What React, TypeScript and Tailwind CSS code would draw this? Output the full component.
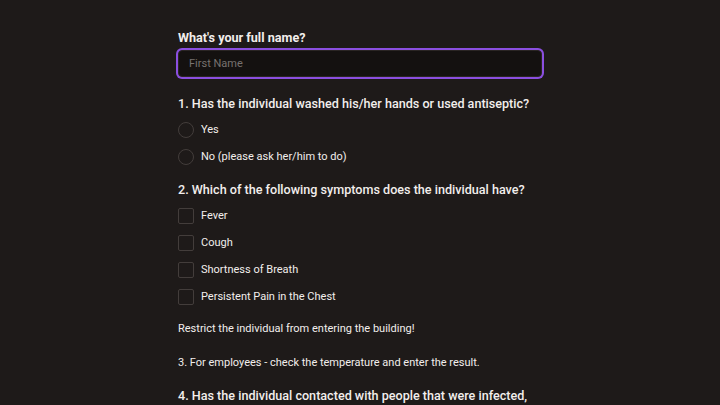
const RADIOS = ["Yes", "No (please ask her/him to do)"];
const SYMPTOMS = ["Fever", "Cough", "Shortness of Breath", "Persistent Pain in the Chest"];

export default function App() {
  return (
    <div
      className="min-h-screen bg-[#1e1a19] text-[#f2eeec] overflow-hidden"
      style={{ fontFamily: "Roboto, 'Noto Sans', sans-serif" }}
    >
      <div className="w-[364px] mx-auto pt-[30px] flex flex-col">
        {/* Name */}
        <label className="text-[12.6px] font-bold leading-[16px]">What's your full name?</label>
        <input
          placeholder="First Name"
          className="mt-[4px] h-[27px] w-full rounded-[4px] bg-[#141110] border border-[#2a2523] ring-2 ring-[#8b4fe0] px-[10px] text-[11px] text-[#f2eeec] placeholder:text-[#77716f] outline-none"
        />

        {/* Q1 */}
        <h2 className="mt-[19px] text-[12.6px] font-medium leading-[16px] whitespace-nowrap">
          1. Has the individual washed his/her hands or used antiseptic?
        </h2>
        <div className="mt-[10px] flex flex-col gap-[11px]">
          {RADIOS.map((r) => (
            <label key={r} className="flex items-center gap-[7px] text-[11px] leading-[16px]">
              <span className="w-[16px] h-[16px] rounded-full border border-[#433d3b] shrink-0" />
              {r}
            </label>
          ))}
        </div>

        {/* Q2 */}
        <h2 className="mt-[17px] text-[12.6px] font-medium leading-[16px] whitespace-nowrap">
          2. Which of the following symptoms does the individual have?
        </h2>
        <div className="mt-[10px] flex flex-col gap-[11px]">
          {SYMPTOMS.map((s) => (
            <label key={s} className="flex items-center gap-[7px] text-[11px] leading-[16px]">
              <span className="w-[16px] h-[16px] rounded-[2px] border border-[#433d3b] shrink-0" />
              {s}
            </label>
          ))}
        </div>

        <p className="mt-[16px] text-[11px] leading-[16px]">Restrict the individual from entering the building!</p>
        <p className="mt-[18px] text-[11px] leading-[16px]">
          3. For employees - check the temperature and enter the result.
        </p>
        <h2 className="mt-[17px] text-[12.6px] font-medium leading-[16px] whitespace-nowrap">
          4. Has the individual contacted with people that were infected,
        </h2>
      </div>
    </div>
  );
}
